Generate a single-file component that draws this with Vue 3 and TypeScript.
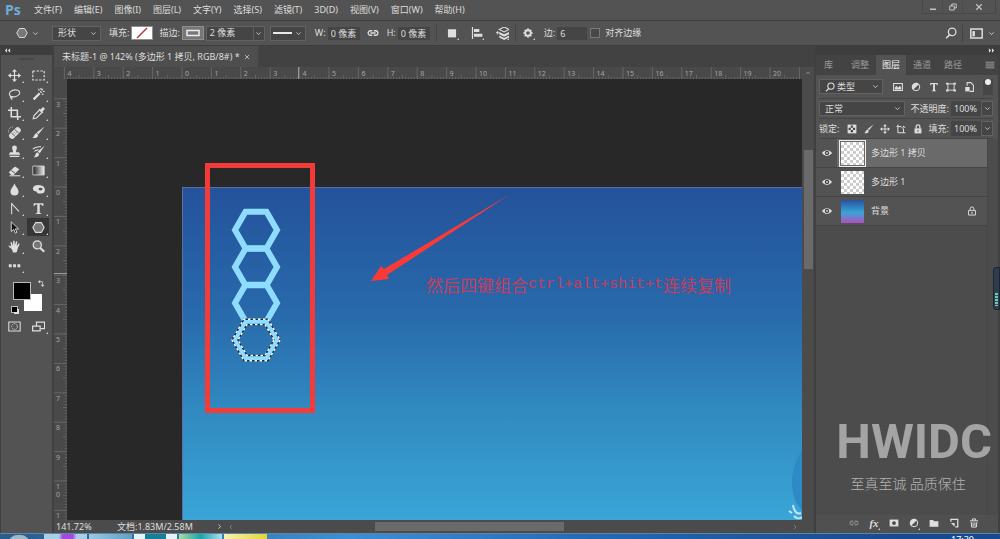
<script setup lang="ts">
import { computed, onBeforeUnmount, onMounted, ref } from 'vue'

const menus = ['文件(F)', '编辑(E)', '图像(I)', '图层(L)', '文字(Y)', '选择(S)', '滤镜(T)', '3D(D)', '视图(V)', '窗口(W)', '帮助(H)']

const icons: Record<string, string> = {
  hexagon: '<path d="M4.5 2h7L15 8l-3.500 6h-7L1 8z" fill="#777" stroke="currentColor" stroke-width="1.300"/>',
  chevron: '<path d="M3 5.500l5 5 5-5" fill="none" stroke="currentColor" stroke-width="1.800"/>',
  up: '<path d="M3 10.500l5-5 5 5" fill="none" stroke="currentColor" stroke-width="1.800"/>',
  left: '<path d="M10.500 3l-5 5 5 5" fill="none" stroke="currentColor" stroke-width="1.800"/>',
  right: '<path d="M5.500 3l5 5-5 5" fill="none" stroke="currentColor" stroke-width="1.800"/>',
  link: '<g fill="none" stroke="currentColor" stroke-width="1.700"><path d="M7 11H4.500a3 3 0 010-6H7M9 5h2.500a3 3 0 010 6H9M4.500 8h7"/></g>',
  square: '<path d="M1.500 2h13v13h-13z" fill="currentColor"/>',
  align: '<path d="M2 0v16M4 4.500h7M4 10.500h11" fill="none" stroke="currentColor" stroke-width="1.600"/><path d="M4 2.500h7v4H4zM4 9h11v4H4z" fill="currentColor"/>',
  arrange: '<path d="M10 0l6 3-6 3-6-3z" fill="none" stroke="currentColor" stroke-width="1.300"/><path d="M4 6l6 3 6-3v3l-6 3-6-3zM4 10.500l6 3 6-3v2.500l-6 3-6-3z" fill="currentColor"/><path d="M0 7h4M2 5v4" stroke="currentColor" stroke-width="1.200"/>',
  gear: '<circle cx="8" cy="8" r="4.400" fill="none" stroke="currentColor" stroke-width="3"/><g stroke="currentColor" stroke-width="2.400"><path d="M8 .5v3M8 12.500v3M.5 8h3M12.500 8h3M2.700 2.700l2 2M11.300 11.300l2 2M2.700 13.300l2-2M11.300 4.700l2-2"/></g>',
  search: '<circle cx="9.500" cy="6.500" r="5" fill="none" stroke="currentColor" stroke-width="1.700"/><path d="M6 10.500L1.500 15" stroke="currentColor" stroke-width="2"/>',
  workspace: '<path d="M1 2.500h14v11H1z" fill="none" stroke="currentColor" stroke-width="1.800"/><path d="M3 5h3v6.500H3z" fill="currentColor"/>',
  minimize: '<path d="M2 11h12v3H2z" fill="currentColor"/>',
  restore: '<g fill="none" stroke="currentColor" stroke-width="2"><path d="M5.500 6V2h9v8h-4"/><path d="M1.500 6h9v8h-9z"/></g>',
  close: '<path d="M2.500 2.500l11 11M13.500 2.500l-11 11" stroke="currentColor" stroke-width="2.400"/>',
  move: '<path d="M8 2v12M2 8h12" stroke="currentColor" stroke-width="1.500"/><path d="M8 0l3 3.500H5zM8 16l3-3.500H5zM0 8l3.500-3v6zM16 8l-3.500-3v6z" fill="currentColor"/>',
  marquee: '<path d="M1 2.500h14v11H1z" fill="none" stroke="currentColor" stroke-width="1.400" stroke-dasharray="3 1.700"/>',
  lasso: '<path d="M4 10.500C1 9.500 1.300 6 3.300 4.200 6 1.900 11.500 1.600 13.700 4c2 2.500-.5 6-5 6.800-2.200.4-3.700-.8-5-.3-1.200.6-.6 2.200.5 1.800 1.500-.6-.2-2.500.6 2.200" fill="none" stroke="currentColor" stroke-width="1.400"/>',
  wand: '<path d="M1 13L8.500 5.500l2 2L3 15z" fill="currentColor"/><path d="M10 4l2 2M13 1l-1 2M15.500 4.500l-2-.5M8 1l1 2M14 8.500L12.500 7M11 0v2" stroke="currentColor" stroke-width="1.400"/>',
  crop: '<path d="M0 4h11.500v8M4 0v12h12M12 12v4" fill="none" stroke="currentColor" stroke-width="1.900"/>',
  eyedropper: '<path d="M9 4l-6.500 6.500L1.500 14.500l4-1L12 7" fill="none" stroke="currentColor" stroke-width="1.400"/><path d="M8 3l1.500-1 1.200 1 1.800-2.200c1.700-1.500 4 .8 2.700 2.500L13 5.300l1 1.200L12.500 8z" fill="currentColor"/>',
  heal: '<g transform="rotate(-45 8.500 8.500)"><rect x="0" y="4.800" width="17" height="7.400" rx="3.500" fill="currentColor"/><path d="M5.500 5v7M11.500 5v7" stroke="#535353"/><path d="M7 7.500h1M9 7.500h1M7 9.500h1M9 9.500h1" stroke="#535353"/></g><path d="M1 8C-.5 4 3 .5 7 1.500" fill="none" stroke="currentColor" stroke-dasharray="1 1.200"/>',
  brush: '<path d="M15.500 .5L8 10 5.800 8z" fill="currentColor"/><path d="M5.300 8.700l2.200 2c.5 3-3 4.800-7 4C3 13 2.700 9.700 5.300 8.700z" fill="currentColor"/>',
  stamp: '<path d="M5 3.500a3 3 0 016 0c0 2-1.500 2.500-1 5.500h3.500L15 12H1l1.500-3H6c.5-3-1-3.500-1-5.500z" fill="currentColor"/><path d="M2 14h12" stroke="currentColor" stroke-width="1.600"/>',
  history: '<path d="M15.500 1L9.500 10 7 8z" fill="currentColor"/><path d="M6.500 9l2.300 1.800C9 14 6 15.500 2.500 15 4.500 13 4 10 6.500 9z" fill="currentColor"/><path d="M1 5c3-3 6-2.500 10-3M3 8c1.500-2 3-2 5-2" fill="none" stroke="currentColor" stroke-width="1.400"/>',
  eraser: '<path d="M1 10l7.500-7 5.500 3.500L7 13.500H4z" fill="currentColor"/><path d="M4 8l5 3.500" stroke="#535353" stroke-width="1.200"/><path d="M2 14.500h13" stroke="currentColor" stroke-width="1.300"/>',
  gradient: '<defs><linearGradient id="toolFade"><stop offset="0" stop-color="#222"/><stop offset="1" stop-color="#eee"/></linearGradient></defs><path d="M1 2.500h14v11H1z" fill="url(#toolFade)" stroke="currentColor"/>',
  drop: '<path d="M8 .5C7 4 3 7 3 10.500a5 5 0 0010 0C13 7 9 4 8 .5z" fill="currentColor"/>',
  sponge: '<path d="M1.500 5.500C3 2 9 2 12.500 3.500c4 2 4 6.500 2 8.500-2 1.500-4 .5-5.500 1-2 0-3-1-3.500-2.500C2.500 10.500 0 8.500 1.500 5.500z" fill="currentColor"/><ellipse cx="10.500" cy="7.500" rx="2.500" ry="1.700" fill="#535353"/>',
  pen: '<path d="M4.500 15V2l9 9.500" fill="none" stroke="currentColor" stroke-width="1.300"/>',
  type: '<path d="M2 1.500h12V5h-1.200c-.3-1.500-.8-2-3.300-2v9.500c0 1 .5 1.300 2 1.400v1h-7v-1c1.500-.1 2-.4 2-1.400V3C4 3 3.500 3.500 3.200 5H2z" fill="currentColor"/>',
  select: '<path d="M4 1v12l3-2.700 2 4.700 2-1-2-4.300h4z" fill="#151515" stroke="currentColor" stroke-width="1.100"/>',
  hand: '<path d="M4.500 11L1 8.300c-.7-1 .4-1.800 1.300-1.300L4.200 8 3 3.500c-.2-1.200 1.200-1.500 1.600-.4L6 6.500l.3-5c.1-1.200 1.700-1.200 1.800 0l.3 4.700 1.400-4c.4-1.100 1.800-.7 1.600.5l-.8 4.600 2-2.500c.8-.9 2-.1 1.400 1L12 10c-.3 2.500-.8 3.800-1.800 5.500H6c-.3-2-.8-3.300-1.500-4.500z" fill="currentColor"/>',
  zoom: '<circle cx="6.500" cy="6" r="5" fill="#777" stroke="currentColor" stroke-width="1.600"/><path d="M10 9.500l5 5" stroke="currentColor" stroke-width="2.600"/>',
  dots: '<path d="M1 6.500h3.500V10H1zM6.300 6.500h3.500V10H6.300zM11.600 6.500h3.500V10h-3.500z" fill="currentColor"/>',
  mask: '<path d="M1 2.500h14v11H1z" fill="none" stroke="currentColor" stroke-width="1.300"/><circle cx="8" cy="8" r="3.500" fill="none" stroke="currentColor" stroke-width="1.200" stroke-dasharray="1.500 1"/>',
  screen: '<path d="M5.500 7.500V2.500h10v8h-5" fill="none" stroke="currentColor" stroke-width="1.500"/><path d="M.8 7.500H10v6H.8z" fill="none" stroke="currentColor" stroke-width="1.500"/>',
  swap: '<path d="M4 4h6.500v7" fill="none" stroke="currentColor" stroke-width="1.600"/><path d="M0 4l5-4v8zM10.500 16l4-5h-8z" fill="currentColor"/>',
  image: '<path d="M1 2.500h14v11H1z" fill="none" stroke="currentColor" stroke-width="1.700"/><path d="M3 12V9l2.500-3L8 9l3-3 2 3v3z" fill="currentColor"/>',
  adjust: '<circle cx="8" cy="8" r="6" fill="none" stroke="currentColor" stroke-width="1.600"/><path d="M12.500 3.500A6.300 6.300 0 003.500 12.500z" fill="currentColor"/>',
  frame: '<path d="M3 3h10v10H3z" fill="none" stroke="currentColor" stroke-width="1.500"/><path d="M0 1h4v3H0zM12 1h4v3h-4zM0 12h4v3H0zM12 12h4v3h-4z" fill="currentColor"/>',
  smart: '<path d="M5 6V1h6l4 4v10H9" fill="none" stroke="currentColor" stroke-width="1.700"/><path d="M2 8h7v7H2z" fill="currentColor"/>',
  pixels: '<path d="M1 1h14v14H1z" fill="currentColor"/><path d="M6 2.500h3.500V6H6zM2.500 6H6v3.500H2.500zM9.500 6H13v3.500H9.500zM6 9.500h3.500V13H6z" fill="#444"/>',
  artboard: '<path d="M3 1v13h9V8M1 4h7M12 3v2h3M12 14h3M8 4l4 4" fill="none" stroke="currentColor" stroke-width="1.600"/>',
  lock: '<path d="M2.500 7h11v8h-11z" fill="currentColor"/><path d="M5 7V4.500a3 3 0 016 0V7" fill="none" stroke="currentColor" stroke-width="2"/><path d="M8 9.500v3" stroke="#535353" stroke-width="1.600"/>',
  padlock: '<path d="M2.500 7h11v7.500h-11z" fill="none" stroke="currentColor" stroke-width="1.500"/><path d="M5 7V4.500a3 3 0 016 0V7" fill="none" stroke="currentColor" stroke-width="1.500"/><path d="M8 9v3.500" stroke="currentColor" stroke-width="1.800"/>',
  eye: '<path d="M0 8c4-6 12-6 16 0-4 6-12 6-16 0z" fill="currentColor"/><circle cx="8" cy="7.800" r="3.500" fill="#444"/><circle cx="8" cy="7.800" r="1.500" fill="currentColor"/>',
  addmask: '<path d="M1 2.500h14v11H1z" fill="currentColor"/><circle cx="8" cy="8" r="3" fill="#484848"/>',
  folder: '<path d="M1 3h5.500l1.500 2h7v9H1z" fill="currentColor"/>',
  page: '<path d="M3 6V2h11v12h-4" fill="none" stroke="currentColor" stroke-width="2"/><path d="M3 8h6v6z" fill="currentColor"/>',
  trash: '<path d="M1.500 4.500h13M5.500 4V1.500h5V4" fill="none" stroke="currentColor" stroke-width="1.600"/><path d="M3.500 6.500l.7 8h7.600l.7-8M6.500 7v6M9.500 7v6" fill="none" stroke="currentColor" stroke-width="1.600"/>',
  menu: '<path d="M1 3.500h14M1 6.500h14M1 9.500h14M1 12.500h14" stroke="currentColor" stroke-width="1.600"/>',
  collapse: '<path d="M7 3L2 8l5 5zM14 3L9 8l5 5z" fill="currentColor"/>',
  expand: '<path d="M2 3l5 5-5 5zM9 3l5 5-5 5z" fill="currentColor"/>',
}

const tools = [
  { id: 'move', label: '移动' }, { id: 'marquee', label: '选框' },
  { id: 'lasso', label: '套索' }, { id: 'wand', label: '魔棒' },
  { id: 'crop', label: '裁剪' }, { id: 'eyedropper', label: '吸管' },
  { id: 'heal', label: '修复' }, { id: 'brush', label: '画笔' },
  { id: 'stamp', label: '图章' }, { id: 'history', label: '历史记录画笔' },
  { id: 'eraser', label: '橡皮擦' }, { id: 'gradient', label: '渐变' },
  { id: 'drop', label: '模糊' }, { id: 'sponge', label: '海绵' },
  { id: 'pen', label: '钢笔' }, { id: 'type', label: '文字' },
  { id: 'select', label: '路径选择' }, { id: 'hexagon', label: '多边形' },
  { id: 'hand', label: '抓手' }, { id: 'zoom', label: '缩放' },
  { id: 'dots', label: '更多' },
]
const activeTool = ref('hexagon')

const panelTabs = ['库', '调整', '图层', '通道', '路径']
const activeTab = ref('图层')

const layers = [
  { name: '多边形 1 拷贝', background: false },
  { name: '多边形 1', background: false },
  { name: '背景', background: true },
]
const activeLayer = ref(0)

const filters = ['image', 'adjust', 'type', 'frame', 'smart']
const locks = ['pixels', 'brush', 'move', 'artboard', 'lock']
const footer = ['link', 'fx', 'addmask', 'adjust', 'folder', 'page', 'trash']

const fillWidth = ref('0 像素')
const fillHeight = ref('0 像素')
const stroke = ref('2 像素')
const sides = ref('6')
const opacity = ref('100%')
const fill = ref('100%')

// Rulers are generated for the visible length of the stage.
const stage = ref<HTMLElement | null>(null)
const stageWidth = ref(0)
const stageHeight = ref(0)
let observer: ResizeObserver | undefined
const measure = () => {
  if (!stage.value) return
  stageWidth.value = stage.value.clientWidth - 12
  stageHeight.value = stage.value.clientHeight - 12
}
onMounted(() => {
  measure()
  observer = new ResizeObserver(measure)
  if (stage.value) observer.observe(stage.value)
})
onBeforeUnmount(() => observer?.disconnect())

const unit = 29.4
const majors = (origin: number, from: number, length: number) => {
  const list: { at: number; label: string }[] = []
  for (let n = from; origin + n * unit < length; n++) list.push({ at: origin + n * unit, label: String(Math.abs(n)) })
  return list
}
const minors = (origin: number, from: number, length: number) => {
  const list: { at: number; long: boolean }[] = []
  for (let n = from * 10; origin + (n * unit) / 10 < length; n++) list.push({ at: origin + (n * unit) / 10, long: n % 5 === 0 })
  return list
}
const hMajors = computed(() => majors(128, -4, stageWidth.value))
const vMajors = computed(() => majors(108, -3, stageHeight.value))
const hMinors = computed(() => minors(128, -4, stageWidth.value))
const vMinors = computed(() => minors(108, -3, stageHeight.value))
const digits = (at: number, label: string) =>
  label.split('').map((char, i) => ({ char, y: at + 8 + i * 8 })).filter(d => d.y < stageHeight.value)

const hex = (cx: number, cy: number, r: number) =>
  Array.from({ length: 6 }, (_, i) => {
    const a = (Math.PI / 3) * i
    return `${(cx + r * Math.cos(a)).toFixed(1)},${(cy + r * Math.sin(a)).toFixed(1)}`
  }).join(' ')
const hexCenters = [151, 188, 224, 261]
</script>

<template>
  <div class="app">
    <header class="menubar">
      <span class="logo">Ps</span>
      <nav class="menus">
        <button v-for="m in menus" :key="m" type="button">{{ m }}</button>
      </nav>
      <div class="window">
        <button type="button" aria-label="最小化"><svg viewBox="0 0 16 16" v-html="icons.minimize" /></button>
        <button type="button" aria-label="还原"><svg viewBox="0 0 16 16" v-html="icons.restore" /></button>
        <button type="button" class="wide" aria-label="关闭"><svg viewBox="0 0 16 16" v-html="icons.close" /></button>
      </div>
    </header>

    <section class="options">
      <button type="button" class="preset" aria-label="多边形工具">
        <svg class="i12" viewBox="0 0 16 16" v-html="icons.hexagon" />
        <svg class="i7" viewBox="0 0 16 16" v-html="icons.chevron" />
      </button>
      <div class="field mode">
        <select aria-label="工具模式"><option>形状</option></select>
        <svg class="i7" viewBox="0 0 16 16" v-html="icons.chevron" />
      </div>
      <div class="pair fillpair">
        <span>填充:</span>
        <button type="button" class="swatch none" aria-label="填充"><svg viewBox="0 0 20 12"><path d="M5 11L15 1" stroke="#c2303a" stroke-width="1.500" /></svg></button>
      </div>
      <div class="pair">
        <span>描边:</span>
        <button type="button" class="swatch line" aria-label="描边"><svg viewBox="0 0 20 12"><path d="M4 3.500h12v5H4z" fill="none" stroke="#eee" stroke-width="1.500" /></svg></button>
      </div>
      <div class="field strokewidth">
        <input v-model="stroke" aria-label="描边宽度">
        <button type="button" class="drop" aria-label="描边选项"><svg class="i7" viewBox="0 0 16 16" v-html="icons.chevron" /></button>
      </div>
      <button type="button" class="field linetype" aria-label="描边类型">
        <span class="rule" />
        <svg class="i7" viewBox="0 0 16 16" v-html="icons.chevron" />
      </button>
      <label class="pair dimension">W: <input v-model="fillWidth" class="box"></label>
      <button type="button" class="chain" aria-label="链接"><svg class="i12" viewBox="0 0 16 16" v-html="icons.link" /></button>
      <label class="pair dimension">H: <input v-model="fillHeight" class="box"></label>
      <div class="ops">
        <button type="button" class="corner" aria-label="路径操作"><svg class="i10" viewBox="0 0 16 16" v-html="icons.square" /></button>
        <button type="button" class="corner" aria-label="路径对齐"><svg class="i12" viewBox="0 0 16 16" v-html="icons.align" /></button>
        <button type="button" class="corner" aria-label="路径排列"><svg class="i14" viewBox="0 0 16 16" v-html="icons.arrange" /></button>
      </div>
      <button type="button" class="corner gear" aria-label="设置"><svg class="i10" viewBox="0 0 16 16" v-html="icons.gear" /></button>
      <label class="pair sides">边: <input v-model="sides" class="box"></label>
      <label class="pair check"><input type="checkbox">对齐边缘</label>
      <div class="tail">
        <button type="button" aria-label="搜索"><svg class="i12" viewBox="0 0 16 16" v-html="icons.search" /></button>
        <button type="button" class="space" aria-label="工作区">
          <svg class="i14" viewBox="0 0 16 16" v-html="icons.workspace" />
          <svg class="i7" viewBox="0 0 16 16" v-html="icons.chevron" />
        </button>
      </div>
    </section>

    <main class="work">
      <aside class="toolbox">
        <button type="button" class="strip" aria-label="折叠工具栏"><svg class="i7" viewBox="0 0 16 16" v-html="icons.collapse" /></button>
        <div class="grip" />
        <div class="tools">
          <button
            v-for="t in tools" :key="t.id" type="button" :aria-label="t.label"
            :class="{ corner: t.id !== 'zoom', active: t.id === activeTool }" @click="activeTool = t.id"
          >
            <svg class="i14" viewBox="0 0 16 16" v-html="icons[t.id]" />
          </button>
        </div>
        <div class="colors">
          <button type="button" class="back" aria-label="背景色" />
          <button type="button" class="fore" aria-label="前景色" />
          <button type="button" class="swap" aria-label="切换颜色"><svg class="i7" viewBox="0 0 16 16" v-html="icons.swap" /></button>
          <button type="button" class="reset" aria-label="默认颜色" />
        </div>
        <div class="tools">
          <button type="button" aria-label="快速蒙版"><svg class="i14" viewBox="0 0 16 16" v-html="icons.mask" /></button>
          <button type="button" class="corner" aria-label="屏幕模式"><svg class="i14" viewBox="0 0 16 16" v-html="icons.screen" /></button>
        </div>
      </aside>

      <section class="document">
        <div class="tabs">
          <div class="tab">未标题-1 @ 142% (多边形 1 拷贝, RGB/8#) *
            <button type="button" aria-label="关闭文档"><svg class="i6" viewBox="0 0 16 16" v-html="icons.close" /></button>
          </div>
        </div>
        <div ref="stage" class="stage">
          <svg class="hruler">
            <path v-for="m in hMinors" :key="m.at" :d="`M${m.at} 12v${m.long ? -4 : -2}`" />
            <g v-for="m in hMajors" :key="m.at">
              <path :d="`M${m.at} 0v12`" />
              <text v-if="m.at + 14 < stageWidth" :x="m.at + 3" y="9">{{ m.label }}</text>
            </g>
            <path class="cursor" d="M244.500 0v12" />
          </svg>
          <div class="vscroll top"><svg class="i6" viewBox="0 0 16 16" v-html="icons.up" /></div>
          <svg class="vruler">
            <path v-for="m in vMinors" :key="m.at" :d="`M13 ${m.at}h${m.long ? -4 : -2}`" />
            <g v-for="m in vMajors" :key="m.at">
              <path :d="`M0 ${m.at}h13`" />
              <text v-for="d in digits(m.at, m.label)" :key="d.y" x="2" :y="d.y">{{ d.char }}</text>
            </g>
            <path class="cursor" d="M0 194.500h13" />
          </svg>
          <div class="canvas">
            <div class="artboard" />
            <svg class="drawing">
              <polygon v-for="cy in hexCenters" :key="cy" class="hexagon" :points="hex(189, cy, 21)" />
              <g v-for="r in [24, 18]" :key="r">
                <polygon class="ants dark" :points="hex(189, 261, r)" />
                <polygon class="ants" :points="hex(189, 261, r)" />
              </g>
              <rect class="frame" x="140.500" y="86.500" width="105" height="245" />
              <polygon class="arrow" points="304,202 314,187 317,190 445,114 320,196 322,200" />
            </svg>
            <svg class="mascot" viewBox="0 0 14 76">
              <path d="M14 6C8 16 3 28 4 42c1 11 4 18 10 24z" fill="#2d8ac4" />
              <path d="M5 61c1 6 4 10 8 8M1 67l3 2M6 72c3 3 5 3 8 1" fill="none" stroke="#c5e7f5" stroke-width="2" />
            </svg>
            <p class="note"><span>然后四键组合</span><code>ctrl+alt+shit+t</code><span>连续复制</span></p>
          </div>
          <div class="vscroll"><div class="vthumb" /></div>
        </div>
        <div class="status">
          <span class="percent">141.72%</span>
          <span class="size">文档:1.83M/2.58M</span>
          <button type="button" aria-label="更多信息"><svg class="i7" viewBox="0 0 16 16" v-html="icons.right" /></button>
          <div class="hscroll">
            <svg class="i6" viewBox="0 0 16 16" v-html="icons.left" />
            <div class="track"><div class="hthumb" /></div>
            <svg class="i6" viewBox="0 0 16 16" v-html="icons.right" />
          </div>
        </div>
      </section>

      <aside class="panel">
        <button type="button" class="strip end" aria-label="折叠面板"><svg class="i7" viewBox="0 0 16 16" v-html="icons.expand" /></button>
        <div class="ptabs">
          <button v-for="t in panelTabs" :key="t" type="button" :class="{ active: t === activeTab }" @click="activeTab = t">{{ t }}</button>
          <button type="button" class="pmenu" aria-label="面板菜单"><svg class="i10" viewBox="0 0 16 16" v-html="icons.menu" /></button>
        </div>
        <div class="prow">
          <div class="field kind">
            <svg class="i10" viewBox="0 0 16 16" v-html="icons.search" />
            <select aria-label="图层类型"><option>类型</option></select>
            <svg class="i7" viewBox="0 0 16 16" v-html="icons.chevron" />
          </div>
          <div class="iconset filters">
            <button v-for="f in filters" :key="f" type="button" :aria-label="f"><svg class="i10" viewBox="0 0 16 16" v-html="icons[f]" /></button>
          </div>
          <button type="button" class="toggle" aria-label="图层过滤"><span /></button>
        </div>
        <div class="prow">
          <div class="field blend">
            <select aria-label="混合模式"><option>正常</option></select>
            <svg class="i7" viewBox="0 0 16 16" v-html="icons.chevron" />
          </div>
          <label class="value">不透明度: <input v-model="opacity" class="box"></label>
          <button type="button" class="drop field" aria-label="不透明度选项"><svg class="i7" viewBox="0 0 16 16" v-html="icons.chevron" /></button>
        </div>
        <div class="prow">
          <span>锁定:</span>
          <div class="iconset locks">
            <button v-for="l in locks" :key="l" type="button" :aria-label="l"><svg class="i10" viewBox="0 0 16 16" v-html="icons[l]" /></button>
          </div>
          <label class="value">填充: <input v-model="fill" class="box"></label>
          <button type="button" class="drop field" aria-label="填充选项"><svg class="i7" viewBox="0 0 16 16" v-html="icons.chevron" /></button>
        </div>
        <div class="layerarea">
          <ul class="layers">
            <li v-for="(l, i) in layers" :key="l.name" :class="{ active: i === activeLayer }" @click="activeLayer = i">
              <button type="button" class="eye" aria-label="可见性"><svg class="i10" viewBox="0 0 16 16" v-html="icons.eye" /></button>
              <div class="thumbwrap"><div class="thumb" :class="{ sky: l.background }" /></div>
              <span class="lname">{{ l.name }}</span>
              <svg v-if="l.background" class="i10" viewBox="0 0 16 16" v-html="icons.padlock" />
            </li>
          </ul>
          <div class="pscroll" />
          <div class="watermark">
            <strong>HWIDC</strong>
            <span>至真至诚 品质保住</span>
          </div>
        </div>
        <div class="pfoot">
          <button v-for="f in footer" :key="f" type="button" :aria-label="f" :class="{ dim: f === 'link', corner: f === 'fx' || f === 'adjust' }">
            <i v-if="f === 'fx'">fx</i>
            <svg v-else class="i10" viewBox="0 0 16 16" v-html="icons[f]" />
          </button>
        </div>
        <div class="gadget"><span /></div>
      </aside>
    </main>

    <footer class="taskbar">
      <span class="orb" />
      <span class="task violet" />
      <span class="task" />
      <span class="task teal" />
      <span class="task green" />
      <span class="task yellow" />
      <span class="clock">17:30</span>
    </footer>
  </div>
</template>

<style>
body {
  margin: 0;
  background: #535353;
}
</style>

<style scoped>
.app {
  position: relative;
  display: flex;
  flex-direction: column;
  height: 100vh;
  min-height: 400px;
  overflow: hidden;
  background: #535353;
  color: #dedede;
  font: 9px/12px "Noto Sans", "Noto Sans CJK SC", sans-serif;
  white-space: nowrap;
}
.app *,
.app *::before,
.app *::after { box-sizing: border-box; }
button {
  display: flex;
  align-items: center;
  justify-content: center;
  padding: 0;
  border: 0;
  background: none;
  color: inherit;
  font: inherit;
}
select,
input {
  min-width: 0;
  margin: 0;
  padding: 0;
  border: 0;
  border-radius: 0;
  background: none;
  color: inherit;
  font: inherit;
  appearance: none;
}
svg { display: block; flex: none; }
.i6 { width: 6px; height: 6px; }
.i7 { width: 7px; height: 7px; }
.i10 { width: 10px; height: 10px; }
.i12 { width: 12px; height: 12px; }
.i14 { width: 13px; height: 13px; }
.corner { position: relative; }
.corner::after {
  position: absolute;
  right: 1px;
  bottom: 1px;
  border: 1px solid transparent;
  border-right-color: #ccc;
  border-bottom-color: #ccc;
  content: "";
}

.menubar {
  display: flex;
  flex: none;
  align-items: center;
  height: 21px;
  padding-left: 5px;
  border-bottom: 1px solid #3f3f3f;
}
.logo {
  width: 29px;
  color: #6fabdc;
  font: bold 14px/18px "Open Sans", sans-serif;
}
.menus { display: flex; flex: 1; gap: 12px; }
.window {
  display: flex;
  align-self: flex-start;
  height: 14px;
  margin-right: 4px;
  border: 1px solid #484848;
  border-top: 0;
  color: #c4c4c4;
}
.window button { width: 20px; border-right: 1px solid #4b4b4b; }
.window .wide { width: 32px; border: 0; }
.window svg { width: 8px; height: 8px; }

.options {
  display: flex;
  flex: none;
  align-items: center;
  height: 25px;
  padding: 0 5px 0 16px;
  border-bottom: 1px solid #3d3d3d;
}
.field {
  display: flex;
  align-items: center;
  height: 15px;
  padding: 0 3px 0 5px;
  border: 1px solid #626262;
  background: #454545;
}
.field select,
.field input { flex: 1; width: 100%; }
.box {
  height: 13px;
  padding: 0 3px;
  background: #454545;
}
.preset { gap: 4px; width: 36px; justify-content: flex-start; }
.mode { width: 49px; }
.pair { display: flex; align-items: center; gap: 2px; }
.fillpair { margin: 0 6px 0 8px; }
.swatch { width: 22px; height: 14px; border: 1px solid #909090; background: #fff; }
.swatch svg { width: 20px; height: 12px; }
.swatch.line { background: #777; }
.strokewidth { width: 59px; margin-left: 2px; padding: 0 0 0 3px; }
.drop { width: 11px; align-self: stretch; border-left: 1px solid #5e5e5e; }
.linetype { gap: 3px; width: 36px; margin: 0 9px 0 5px; padding-left: 2px; justify-content: flex-start; }
.rule { width: 22px; height: 2px; background: #e8e8e8; }
.dimension .box { width: 32px; }
.chain { width: 27px; }
.ops {
  display: flex;
  gap: 10px;
  align-self: stretch;
  align-items: center;
  margin: 3px 2px 3px 6px;
  padding: 0 5px 0 8px;
  border: solid #444;
  border-width: 0 1px;
}
.ops .corner,
.gear { width: 15px; height: 16px; }
.gear { margin: 0 8px 0 3px; }
.sides .box { width: 30px; }
.check { gap: 5px; margin-left: 3px; }
.check input { width: 10px; height: 10px; border: 1px solid #777; background: #484848; }
.tail { display: flex; align-items: center; margin-left: auto; }
.space { gap: 5px; margin-left: 5px; padding: 2px 0 2px 7px; border-left: 1px solid #444; }

.work { display: flex; flex: 1; min-height: 0; }
.strip {
  flex: none;
  justify-content: flex-start;
  width: 100%;
  height: 9px;
  padding: 0 3px;
  background: #3d3d3d;
}
.strip.end { justify-content: flex-end; }
.toolbox { flex: none; width: 54px; border-right: 2px solid #404040; border-left: 1px solid #404040; }
.grip { width: 14px; height: 2px; margin: 3px auto 6px; background: #474747; }
.tools { display: grid; grid-template-columns: 24px 24px; grid-auto-rows: 19px; margin-left: 1px; }
.tools button { height: 18px; margin: 0 1px; }
.tools .active { background: #363636; }
.colors { position: relative; width: 34px; height: 37px; margin: 4px 0 1px 10px; }
.colors button { position: absolute; }
.fore { top: 3px; left: 2px; width: 18px; height: 18px; border: 1px solid #bbb; background: #000; }
.back { top: 15px; left: 13px; width: 18px; height: 17px; background: #fff; }
.swap { top: 1px; right: 0; }
.reset { bottom: 4px; left: 1px; width: 5px; height: 5px; background: #000; box-shadow: 2px 2px #ddd, 0 0 0 1px #bbb; }

.document { display: flex; flex: 1; flex-direction: column; min-width: 0; background: #424242; }
.tabs { display: flex; flex: none; height: 21px; }
.tab {
  display: flex;
  align-items: center;
  gap: 4px;
  padding: 0 8px;
  background: #4e4e4e;
}
.tab button { color: #bbb; }
.stage {
  display: grid;
  flex: 1;
  grid-template: 12px minmax(0, 1fr) / 13px minmax(0, 1fr) 12px;
  min-height: 0;
}
.hruler,
.vruler { width: 100%; height: 100%; overflow: hidden; background: #494949; }
.hruler { grid-column: 1 / 3; }
.vruler { min-height: 0; }
.hruler path,
.vruler path { fill: none; stroke: #666; stroke-width: 1px; }
.hruler text,
.vruler text { fill: #a5a5a5; font-size: 7px; }
.hruler .cursor,
.vruler .cursor { stroke: #999; }
.vscroll { display: flex; justify-content: center; background: #4b4b4b; }
.vscroll.top { align-items: center; color: #aaa; }
.vthumb { width: 9px; height: 27%; margin-top: 71px; background: #6a6a6a; }
.canvas { position: relative; overflow: hidden; background: #282828; }
.artboard {
  position: absolute;
  inset: 108px 0 0 115px;
  border: 1px solid #5c6da8;
  border-width: 1px 0 0 1px;
  background: linear-gradient(#24529b, #286aab 38%, #318bc1 68%, #3aa5d7);
}
.drawing { position: absolute; width: 100%; height: 100%; }
.hexagon { fill: none; stroke: #8edcff; stroke-width: 6px; }
.ants { fill: none; stroke: #fff; stroke-dasharray: 2.500; stroke-width: 1.500px; }
.ants.dark { stroke: #12304a; stroke-dasharray: none; }
.frame { fill: none; stroke: #f33c39; stroke-width: 5px; }
.arrow { fill: #fb3a38; }
.mascot { position: absolute; right: 0; bottom: 0; width: 14px; height: 76px; }
.note {
  position: absolute;
  top: 196px;
  left: 359px;
  display: flex;
  align-items: center;
  margin: 0;
  color: #c53d5d;
  font: 17px/20px "Noto Sans CJK SC", sans-serif;
}
.note code { font: 15px/20px "Liberation Mono", monospace; }
.status { display: flex; flex: none; align-items: center; height: 13px; padding-left: 2px; background: #4b4b4b; }
.percent { width: 61px; }
.size { width: 96px; }
.status button { width: 12px; }
.hscroll { display: flex; flex: 1; align-items: center; height: 13px; padding: 0 16px 0 3px; color: #999; }
.track { flex: 1; height: 9px; margin-left: 2px; }
.hthumb { width: 34%; height: 9px; margin-left: 25%; background: #6a6a6a; }

.panel { position: relative; display: flex; flex: none; flex-direction: column; width: 186px; border: solid #404040; border-width: 0 2px; }
.ptabs { display: flex; flex: none; gap: 1px; height: 20px; background: #434343; color: #999; }
.ptabs button { padding: 0 6px; }
.ptabs button:first-child { padding: 0 11px 0 8px; }
.ptabs .active { background: #535353; color: #f2f2f2; }
.ptabs .pmenu { margin-left: auto; padding: 0 3px; }
.prow {
  display: flex;
  flex: none;
  align-items: center;
  height: 20px;
  margin: 0 5px 0 3px;
  border-bottom: 1px solid #454545;
}
.prow:nth-of-type(2) { height: 24px; }
.iconset { display: flex; flex: 1; justify-content: space-between; }
.kind { gap: 2px; width: 64px; }
.filters { padding: 0 9px 0 10px; }
.toggle { width: 10px; height: 16px; align-items: flex-start; background: #474747; }
.toggle span { width: 6px; height: 6px; border-radius: 3px; background: #eee; }
.blend { width: 86px; margin-right: auto; }
.locks { padding: 0 6px 0 8px; }
.value { display: flex; align-items: center; gap: 2px; }
.value .box { width: 30px; height: 15px; }
.prow .drop { width: 12px; padding: 0; height: 15px; align-self: center; }
.layerarea { position: relative; display: flex; flex: 1; min-height: 0; background: #4c4c4c; }
.layers { flex: 1; margin: 0; padding: 0; list-style: none; }
.layers li {
  display: flex;
  align-items: center;
  height: 29px;
  padding-right: 10px;
  border-bottom: 1px solid #454545;
  background: #535353;
}
.layers .active { background: #6a6a6a; }
.eye { width: 21px; height: 28px; background: #535353; }
.thumbwrap { margin: 0 5px 0 2px; padding: 1px; border: 1px solid transparent; }
.active .thumbwrap { border-color: #eee; }
.thumb { width: 23px; height: 23px; background: repeating-conic-gradient(#ccc 0 25%, #fff 0 50%) 0 0 / 6px 6px; }
.thumb.sky { background: linear-gradient(#24549d, #3aa5d7 55%, #b04fc0); }
.lname { flex: 1; }
.pscroll { width: 11px; border-left: 1px solid #474747; }
.watermark {
  position: absolute;
  right: 6px;
  bottom: 22px;
  display: flex;
  flex-direction: column;
  align-items: center;
  gap: 5px;
  color: #a4a4a4;
}
.watermark strong { font: bold 49px/52px Roboto, sans-serif; }
.watermark span { margin-right: 12px; color: #b3b3b3; font: 300 14px/20px "Noto Sans CJK SC", sans-serif; }
.pfoot { display: flex; flex: none; justify-content: flex-end; gap: 6px; height: 18px; padding-right: 17px; background: #505050; }
.pfoot button { width: 14px; height: 16px; }
.pfoot i { font: italic bold 11px/12px "Liberation Serif", serif; }
.pfoot .dim { color: #8a8a8a; }
.gadget {
  position: absolute;
  top: 221px;
  right: -2px;
  display: flex;
  align-items: flex-end;
  width: 7px;
  height: 43px;
  padding: 3px 1px;
  border: 1px solid #1c2433;
  border-radius: 3px 0 0 3px;
  background: #323c50;
}
.gadget span { width: 4px; height: 13px; background: repeating-linear-gradient(#6fc5b0 0 2px, #2f5a58 2px 3px); }

.taskbar {
  display: flex;
  flex: none;
  gap: 2px;
  height: 6px;
  overflow: hidden;
  border-top: 1px solid #5c86a8;
  background: linear-gradient(90deg, #2a5c8a, #3e8fcf 35%, #2568b0 60%, #174a8c 90%);
}
.orb { width: 20px; height: 8px; margin: 1px 13px 0 9px; border-radius: 10px 10px 0 0; background: #9eb8c8; }
.task { width: 43px; background: linear-gradient(90deg, #9cc8e2, #5f9fc8); }
.task.violet { background: radial-gradient(circle at 55% 50%, #a348e0 0 5px, #a9cfe6 9px); }
.task.teal { background: linear-gradient(90deg, #e4f4f8 25%, #157f98 25% 75%, #e4f4f8 75%); }
.task.green { background: linear-gradient(90deg, #a8dfa0, #1aa3a8 50%, #b5dcf0); }
.task.yellow { background: linear-gradient(90deg, #f7f2b0, #e3d53c); }
.clock { margin: 0 26px 0 auto; color: #fff; }
</style>
